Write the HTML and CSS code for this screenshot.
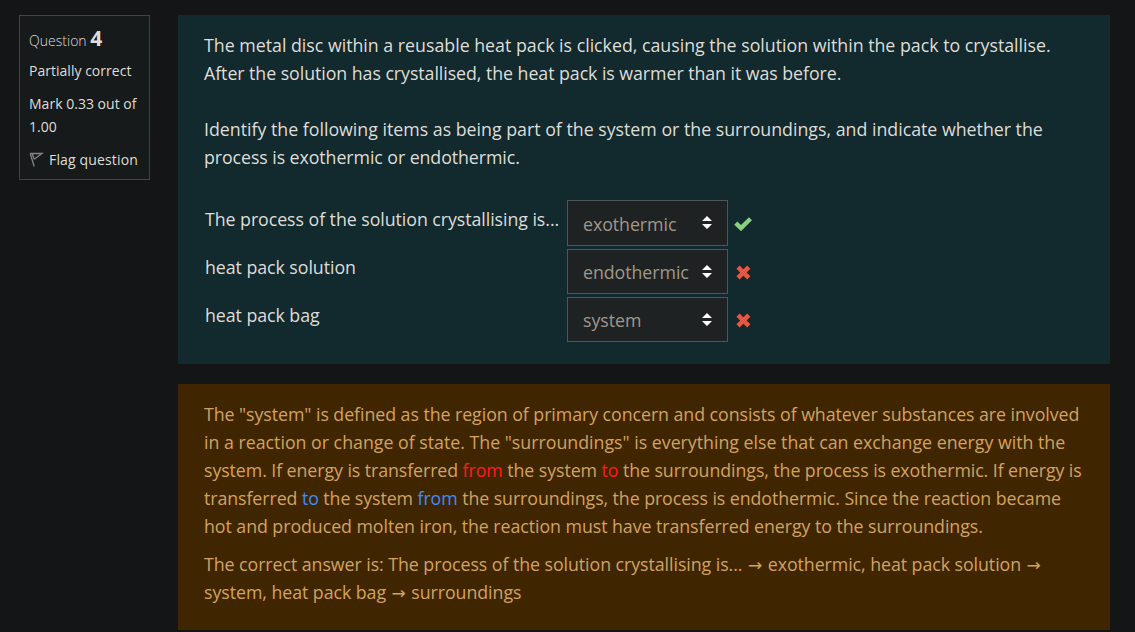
FILE: index.html
```
<!DOCTYPE html>
<html lang="en">
<head>
<meta charset="utf-8">
<title>Question 4</title>
<link rel="stylesheet" href="styles.css">
</head>
<body>
<main class="question">
  <aside class="info">
    <h3 class="number">Question <strong>4</strong></h3>
    <div class="state">Partially correct</div>
    <div class="grade">Mark 0.33 out of<br>1.00</div>
    <div class="flag">
      <svg class="flag-icon" width="15" height="16" viewBox="0 0 15 16"><path d="M1.2 1.5H13L5.3 7.2M1.2 1.5L5.2 14.5M3.2 2L5.3 7.2" fill="none" stroke="#858585" stroke-width="1.3"/></svg>
      <span>Flag question</span>
    </div>
  </aside>
  <div class="content">
    <section class="formulation">
      <p class="prompt"><span class="wide">The metal disc within a reusable heat pack is clicked, causing the solution within the pack to crystallise.</span><br>After the solution has crystallised, the heat pack is warmer than it was before.</p>
      <p class="prompt"><span class="wide">Identify the following items as being part of the system or the surroundings, and indicate whether the</span><br><span class="tight">process is exothermic or endothermic.</span></p>
      <div class="answers">
        <div class="row">
          <div class="label">The process of the solution crystallising is...</div>
          <div class="select"><span>exothermic</span><svg width="10" height="13" viewBox="0 0 10 13"><path d="M0 5L5 0L10 5ZM0 8H10L5 13Z" fill="#fff"/></svg></div>
          <svg class="mark check" width="18" height="15" viewBox="0 0 18 15"><path d="M1.8 7.1L7 12.1L16.5 2.7" fill="none" stroke="#86d07e" stroke-width="4.4"/></svg>
        </div>
        <div class="row">
          <div class="label">heat pack solution</div>
          <div class="select"><span>endothermic</span><svg width="10" height="13" viewBox="0 0 10 13"><path d="M0 5L5 0L10 5ZM0 8H10L5 13Z" fill="#fff"/></svg></div>
          <svg class="mark" width="18" height="15" viewBox="0 0 18 15"><path d="M4 2.1L14.8 12.9M14.8 2.1L4 12.9" fill="none" stroke="#e85642" stroke-width="4.5"/></svg>
        </div>
        <div class="row">
          <div class="label">heat pack bag</div>
          <div class="select"><span>system</span><svg width="10" height="13" viewBox="0 0 10 13"><path d="M0 5L5 0L10 5ZM0 8H10L5 13Z" fill="#fff"/></svg></div>
          <svg class="mark" width="18" height="15" viewBox="0 0 18 15"><path d="M4 2.1L14.8 12.9M14.8 2.1L4 12.9" fill="none" stroke="#e85642" stroke-width="4.5"/></svg>
        </div>
      </div>
    </section>
    <section class="feedback">
      <p class="explanation">The "system" is defined as the region of primary concern and consists of whatever substances are involved<br><span class="wide">in a reaction or change of state. The "surroundings" is everything else that can exchange energy with the</span><br><span class="tight">system. If energy is transferred <span class="red">from</span> the system <span class="red">to</span> the surroundings, the process is exothermic. If energy is</span><br><span class="tight">transferred <span class="blue">to</span> the system <span class="blue">from</span> the surroundings, the process is endothermic. Since the reaction became</span><br>hot and produced molten iron, the reaction must have transferred energy to the surroundings.</p>
      <p class="explanation">The correct answer is: The process of the solution crystallising is... <span class="arrow">→</span> exothermic, heat pack solution <span class="arrow">→</span><br>system, heat pack bag <span class="arrow">→</span> surroundings</p>
    </section>
  </div>
</main>
</body>
</html>
```
FILE: styles.css
```
* { box-sizing: border-box; }
body {
  margin: 0;
  height: 632px;
  overflow: hidden;
  background: #141517;
  color: #dfddd8;
  font: 17.8px/28px "Open Sans", "Noto Sans", sans-serif;
  letter-spacing: -0.06px;
  white-space: nowrap;
}
p, h3 { margin: 0; }
.question {
  display: flex;
  align-items: flex-start;
  gap: 28px;
  padding: 15px 25px 0 19px;
}
.info {
  width: 131px;
  height: 165px;
  padding: 8px 9px;
  border: 1px solid #414344;
  background: #161a1b;
  font-size: 14px;
  line-height: 23px;
  letter-spacing: 0.02px;
}
.number {
  height: 28px;
  font-size: 14px;
  font-weight: 300;
  line-height: 28px;
}
.number strong { font-size: 21px; font-weight: 700; }
.state { margin-top: 7px; }
.grade { margin-top: 10px; }
.flag { display: flex; align-items: center; gap: 5px; margin-top: 10px; letter-spacing: 0.15px; }
.flag-icon { margin-top: 1px; }
.content { width: 932px; }
.formulation {
  height: 349px;
  padding: 16px 26px;
  background: #12292d;
}
.prompt { margin-bottom: 28px; }
.wide { letter-spacing: -0.01px; }
.tight { letter-spacing: -0.08px; }
.answers { display: grid; gap: 3px; padding: 1px 0 0 1px; }
.row { display: flex; align-items: center; height: 45px; }
.row:first-child { height: 46px; }
.label { width: 362px; height: 37px; line-height: 28px; }
.select {
  display: flex;
  align-items: center;
  justify-content: space-between;
  width: 161px;
  height: 100%;
  padding: 1px 15px 0;
  border: 1px solid #505557;
  background: #1f2223;
  color: #a0978a;
}
.select svg { margin-bottom: 2px; }
.mark { margin: 2px 0 0 6px; }
.check { margin-top: 0; }
.feedback {
  height: 246px;
  margin-top: 20px;
  padding: 16px 26px;
  background: #402600;
  color: #d2a263;
}
.explanation { margin-bottom: 10px; }
.red { color: #ff1a1a; }
.blue { color: #3d8bff; }
.arrow { padding: 0 1px; font-family: "DejaVu Sans", sans-serif; font-size: 17px; line-height: 0; }
```
